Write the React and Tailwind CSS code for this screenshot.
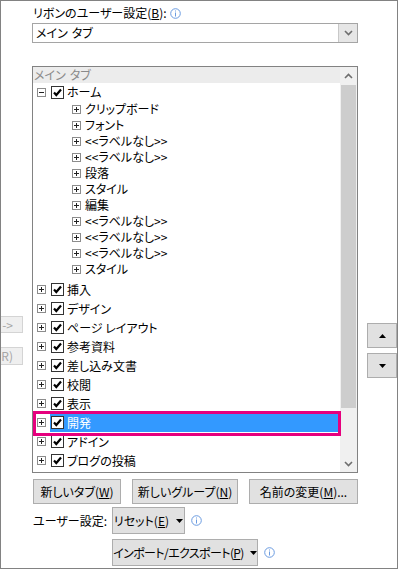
import React from "react";

const Info = () => (
  <svg width="11" height="11" viewBox="0 0 11 11" className="shrink-0">
    <circle cx="5.5" cy="5.5" r="4.8" fill="none" stroke="#6a9be0" strokeWidth="1" />
    <rect x="5" y="2.5" width="1" height="1" fill="#6a9be0" />
    <rect x="5" y="4.5" width="1" height="4" fill="#6a9be0" />
  </svg>
);

const Expander = ({ open }) => (
  <svg width="9" height="9" viewBox="0 0 9 9" className="shrink-0">
    <rect x="0.5" y="0.5" width="8" height="8" fill="#fff" stroke="#8c8c8c" />
    <rect x="2" y="4" width="5" height="1" fill="#222" />
    {!open && <rect x="4" y="2" width="1" height="5" fill="#222" />}
  </svg>
);

const Check = () => (
  <svg width="13" height="13" viewBox="0 0 13 13" className="shrink-0">
    <rect x="0.5" y="0.5" width="12" height="12" fill="#fff" stroke="#333" />
    <path d="M3 6.5 L5.3 9 L10 3.5" fill="none" stroke="#000" strokeWidth="2.2" />
  </svg>
);

const Chevron = ({ up, color = "#6e6e6e" }) => (
  <svg width="9" height="6" viewBox="0 0 9 6">
    <path d={up ? "M1 5 L4.5 1.5 L8 5" : "M1 1 L4.5 4.5 L8 1"} fill="none" stroke={color} strokeWidth="1.6" />
  </svg>
);

const Tri = ({ up }) => (
  <svg width="7" height="4" viewBox="0 0 7 4" className="shrink-0">
    <path d={up ? "M0 4 L3.5 0 L7 4 Z" : "M0 0 L3.5 4 L7 0 Z"} fill="#000" />
  </svg>
);

const children = [
  "クリップボード",
  "フォント",
  "<<ラベルなし>>",
  "<<ラベルなし>>",
  "段落",
  "スタイル",
  "編集",
  "<<ラベルなし>>",
  "<<ラベルなし>>",
  "<<ラベルなし>>",
  "スタイル",
];

const tabs = ["挿入", "デザイン", "ページ レイアウト", "参考資料", "差し込み文書", "校閲", "表示", "開発", "アドイン", "ブログの投稿"];

const Btn = ({ children, className = "" }) => (
  <div className={`flex items-center justify-center whitespace-nowrap border border-[#adadad] bg-[#e1e1e1] text-black ${className}`}>
    {children}
  </div>
);

const MainTab = () => (
  <span>
    メイン<span className="inline-block w-[4px]" />タブ
  </span>
);

const App = () => {
  return (
    <div
      className="w-[399px] h-[569px] bg-white overflow-hidden text-[12px] leading-none text-black [font-feature-settings:'palt']"
      style={{ fontFamily: '"Noto Sans CJK JP", "Noto Sans", sans-serif' }}
    >
      <div className="w-[398px] h-[569px] border border-[#828282] flex">
        {/* left column: clipped add/remove buttons */}
        <div className="w-[31px] flex flex-col pt-[315px]">
          <div className="w-[22px] h-[17px] overflow-hidden flex justify-end">
            <div className="shrink-0 w-[70px] h-[17px] border border-[#d4d4d4] bg-[#efefef] text-[#a6a6a6] flex items-center justify-end pr-[9px] whitespace-nowrap">
              追加(A) -&gt;
            </div>
          </div>
          <div className="mt-[14px] w-[22px] h-[18px] overflow-hidden flex justify-end">
            <div className="shrink-0 w-[70px] h-[18px] border border-[#d4d4d4] bg-[#efefef] text-[#a6a6a6] flex items-center justify-end pr-[9px] whitespace-nowrap">
              &lt;- 削除(R)
            </div>
          </div>
        </div>

        {/* main column */}
        <div className="w-[326px] flex flex-col">
          <div className="h-[22px] flex items-center gap-[3px] pl-[1px] pt-[2px]">
            <span>
              リボンのユーザー設定(<span className="underline">B</span>):
            </span>
            <Info />
          </div>
          <div className="h-[20px] border border-[#a5a5a5] flex">
            <div className="flex-1 flex items-center pl-[3px]">
              <MainTab />
            </div>
            <div className="w-[19px] bg-[#e6e6e6] border-l border-[#c8c8c8] flex items-center justify-center">
              <Chevron />
            </div>
          </div>

          {/* tree list */}
          <div className="mt-[23px] h-[407px] border border-[#828282] flex">
            <div className="flex-1 flex flex-col">
              <div className="h-[16px] bg-[#ececec] text-[#8a8a8a] flex items-center pl-[1px]">
                <MainTab />
              </div>
              <div className="h-[18px] flex items-center pl-[4px]">
                <Expander open />
                <div className="ml-[5px]">
                  <Check />
                </div>
                <span className="ml-[3px]">ホーム</span>
              </div>
              {children.map((c, i) => (
                <div key={i} className="h-[16px] flex items-center pl-[39px]">
                  <Expander />
                  <span className="ml-[4px]">{c}</span>
                </div>
              ))}
              <div className="h-[3px]" />
              {tabs.map((t) => {
                const sel = t === "開発";
                return (
                  <div key={t} className="relative h-[19px] flex items-center pl-[4px]">
                    {sel && <div className="absolute left-[17px] right-[2px] top-[1px] bottom-0 bg-[#3399ff]" />}
                    <Expander />
                    <div className="relative ml-[5px]">
                      <Check />
                    </div>
                    <span className={`relative ml-[3px] ${sel ? "text-white" : ""}`}>{t}</span>
                    {sel && (
                      <div className="absolute left-0 -right-[1px] -top-[2px] -bottom-[4px] border-[3px] border-[#e6007e] z-10" />
                    )}
                  </div>
                );
              })}
            </div>
            {/* scrollbar */}
            <div className="w-[17px] bg-[#f0f0f0] flex flex-col">
              <div className="h-[18px] flex items-center justify-center">
                <Chevron up />
              </div>
              <div className="mx-[1px] h-[323px] bg-[#cdcdcd]" />
              <div className="flex-1" />
              <div className="h-[17px] flex items-center justify-center">
                <Chevron />
              </div>
            </div>
          </div>

          {/* buttons */}
          <div className="mt-[6px] flex">
            <Btn className="w-[88px] h-[25px] ml-[1px]">
              新しいタブ(<span className="underline">W</span>)
            </Btn>
            <Btn className="w-[106px] h-[25px] ml-[11px]">
              新しいグループ(<span className="underline">N</span>)
            </Btn>
            <Btn className="w-[109px] h-[25px] ml-[11px]">
              名前の変更(<span className="underline">M</span>)...
            </Btn>
          </div>
          <div className="mt-[3px] flex items-center">
            <span className="w-[80px] pl-[1px]">ユーザー設定:</span>
            <Btn className="w-[73px] h-[27px] gap-[7px]">
              <span>
                リセット(<span className="underline">E</span>)
              </span>
              <Tri />
            </Btn>
            <div className="ml-[6px]">
              <Info />
            </div>
          </div>
          <div className="mt-[5px] flex items-center pl-[80px]">
            <Btn className="w-[146px] h-[27px] gap-[6px]">
              <span className="whitespace-nowrap tracking-[-0.6px]">
                インポート/エクスポート(<span className="underline">P</span>)
              </span>
              <Tri />
            </Btn>
            <div className="ml-[6px]">
              <Info />
            </div>
          </div>
        </div>

        {/* right column: move up/down */}
        <div className="flex-1 flex flex-col items-end pt-[322px]">
          <Btn className="w-[30px] h-[25px]">
            <Tri up />
          </Btn>
          <Btn className="w-[30px] h-[25px] mt-[5px]">
            <Tri />
          </Btn>
        </div>
      </div>
    </div>
  );
};

export default App;
